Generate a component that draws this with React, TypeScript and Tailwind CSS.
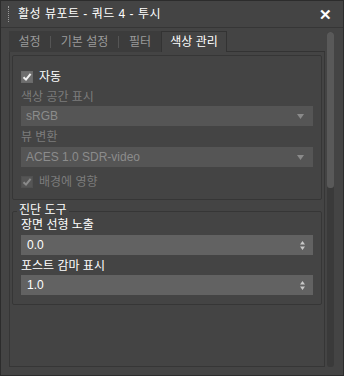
import React from "react";

const font = "font-['Liberation_Sans','Noto_Sans_CJK_KR',sans-serif]";

function Check({ disabled }: { disabled?: boolean }) {
  return (
    <span
      className={`flex h-[12px] w-[12px] items-center justify-center border ${
        disabled ? "border-[#505050] bg-[#555555]" : "border-[#6a6a6a] bg-[#6e6e6e]"
      }`}
    >
      <svg width="10" height="10" viewBox="0 0 10 10">
        <path
          d="M1.5 5.2 L4 7.6 L8.6 1.8"
          fill="none"
          stroke={disabled ? "#8a8a8a" : "#f0f0f0"}
          strokeWidth="2"
        />
      </svg>
    </span>
  );
}

function Dropdown({ value }: { value: string }) {
  return (
    <div className="flex h-[20px] items-center justify-between bg-[#555555] pl-[5px] pr-[9px] text-[12px] leading-[14px] text-[#8c8c8c]">
      <span>{value}</span>
      <svg width="7" height="5" viewBox="0 0 7 5">
        <path d="M0 0 H7 L3.5 5 Z" fill="#8a8a8a" />
      </svg>
    </div>
  );
}

function Spinner({ value }: { value: string }) {
  return (
    <div className="flex h-[20px] items-center justify-between bg-[#626262] pl-[6px] pr-[8px] text-[12px] leading-[14px] text-white">
      <span>{value}</span>
      <svg width="5" height="9" viewBox="0 0 5 9">
        <path d="M2.5 0 L5 3.5 H0 Z M0 5.5 H5 L2.5 9 Z" fill="#c8c8c8" />
      </svg>
    </div>
  );
}

export default function App() {
  return (
    <div className={`${font} flex h-[376px] w-[344px] flex-col border border-[#2c2c2c] bg-[#444444]`}>
      <div className="flex h-[27px] shrink-0 items-center border-b border-[#363636] pl-[7px] pr-[11px]">
        <span className="h-[16px] border-l border-dotted border-[#9a9a9a]" />
        <span className="ml-[9px] text-[12px] leading-[14px] tracking-[0.5px] text-white">활성 뷰포트 - 쿼드 4 - 투시</span>
        <span className="ml-auto text-[15px] font-bold leading-none text-white">✕</span>
      </div>

      <div className="flex flex-1 pt-[3px] pb-[8px] pl-[8px]">
        <div className="flex w-[316px] flex-col">
          <div className="flex h-[21px] text-[12px] leading-[14px]">
            <div className="flex items-center bg-[#3c3c3c] text-[#9a9a9a]">
              <span className="w-[41px] text-center">설정</span>
              <span className="h-[12px] border-l border-[#555555]" />
              <span className="w-[67px] text-center">기본 설정</span>
              <span className="h-[12px] border-l border-[#555555]" />
              <span className="w-[42px] text-center">필터</span>
            </div>
            <div className="flex w-[66px] items-center justify-center border-x border-t border-[#333333] bg-[#444444] text-white">
              색상 관리
            </div>
            <div className="flex-1 border-b border-[#333333]" />
          </div>

          <div className="flex flex-1 flex-col border-x border-b border-[#363636] px-[2px] pt-[3px] text-[12px] leading-[14px]">
            <div className="flex flex-col rounded-[2px] border border-[#363636] px-[8px] pt-[14px] pb-[10px]">
              <label className="flex h-[14px] items-center gap-[6px] text-white">
                <Check />
                <span>자동</span>
              </label>
              <div className="mt-[6px] text-[#7c7c7c]">색상 공간 표시</div>
              <div className="mt-[2px]">
                <Dropdown value="sRGB" />
              </div>
              <div className="mt-[4px] text-[#7c7c7c]">뷰 변환</div>
              <div className="mt-[3px]">
                <Dropdown value="ACES 1.0 SDR-video" />
              </div>
              <label className="mt-[8px] flex h-[14px] items-center gap-[6px] text-[#7c7c7c]">
                <Check disabled />
                <span>배경에 영향</span>
              </label>
            </div>

            <div className="relative mt-[11px] flex flex-col rounded-[2px] border border-[#363636] px-[8px] pt-[6px] pb-[9px]">
              <span className="absolute left-[4px] top-[-8px] bg-[#444444] px-[2px] leading-[12px] text-white">
                진단 도구
              </span>
              <div className="text-white">장면 선형 노출</div>
              <div className="mt-[3px]">
                <Spinner value="0.0" />
              </div>
              <div className="mt-[4px] text-white">포스트 감마 표시</div>
              <div className="mt-[2px]">
                <Spinner value="1.0" />
              </div>
            </div>
          </div>
        </div>

        <div className="ml-[2px] mt-[1px] flex w-[7px] flex-col overflow-hidden rounded-[3px] bg-[#3a3a3a]">
          <div className="h-[156px] rounded-[3px] bg-[#595959]" />
        </div>
      </div>
    </div>
  );
}
